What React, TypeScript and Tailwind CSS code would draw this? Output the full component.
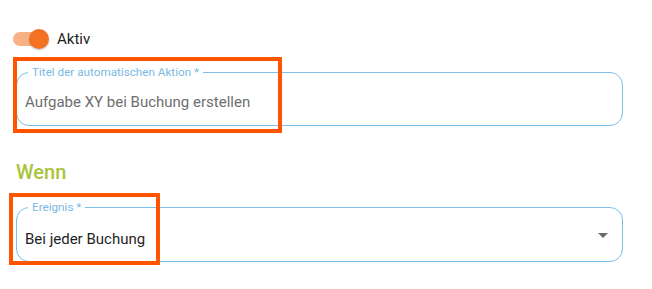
import React from 'react'

// Outlined text field with floating label (MUI style)
const OutlinedField = ({
  label,
  value,
  muted,
  select,
  height,
  textTop,
  children,
}: {
  label: string
  value: string
  muted?: boolean
  select?: boolean
  height: string
  textTop: string
  children?: React.ReactNode
}) => (
  <div className={`relative w-full ${height} rounded-[13px] border border-[#7cc0e9]`}>
    <span className="absolute -top-[9px] left-[11px] bg-white px-1 text-[11.7px] leading-4 text-[#7ab9e3]">
      {label}
    </span>
    <div className={`pl-2 ${textTop} text-[15px] leading-6 ${muted ? 'text-[#6e6e6e]' : 'text-[#1f1f1f]'}`}>
      {value}
    </div>
    {select && (
      <svg
        viewBox="0 0 24 24"
        className="absolute right-[7px] top-1/2 h-6 w-6 -translate-y-1/2 fill-[#6b6b6b]"
      >
        <path d="M7 10l5 5 5-5z" />
      </svg>
    )}
    {children}
  </div>
)

export default function App() {
  return (
    <div className="h-[289px] w-[652px] overflow-hidden bg-white pl-4 pr-[29px] pt-[29px] font-['Roboto',sans-serif]">
      {/* Toggle */}
      <div className="-ml-[3px] flex h-5 items-center gap-2">
        <div className="relative h-5 w-9">
          <div className="absolute left-0 top-[3px] h-[14px] w-[34px] rounded-full bg-[#f8b185]" />
          <div className="absolute right-0 top-0 h-5 w-5 rounded-full bg-[#f37224] shadow-[0_1px_2px_rgba(0,0,0,0.25)]" />
        </div>
        <span className="text-[15px] leading-5 text-[#222]">Aktiv</span>
      </div>

      <div className="mt-[23px]">
        <OutlinedField
          label="Titel der automatischen Aktion *"
          value="Aufgabe XY bei Buchung erstellen"
          muted
          height="h-[54px]"
          textTop="pt-[17px]"
        >
          <div className="pointer-events-none absolute -left-[4px] -top-[16px] h-[76px] w-[269px] border-4 border-[#ff5500]" />
        </OutlinedField>
      </div>

      <h2 className="mt-[32px] text-[20px] font-medium leading-7 text-[#a9c43c]">Wenn</h2>

      <div className="mt-[21px]">
        <OutlinedField
          label="Ereignis *"
          value="Bei jeder Buchung"
          select
          height="h-[55px]"
          textTop="pt-[19px]"
        >
          <div className="pointer-events-none absolute -left-[8px] -top-[15px] h-[72px] w-[151px] border-4 border-[#ff5500]" />
        </OutlinedField>
      </div>
    </div>
  )
}
